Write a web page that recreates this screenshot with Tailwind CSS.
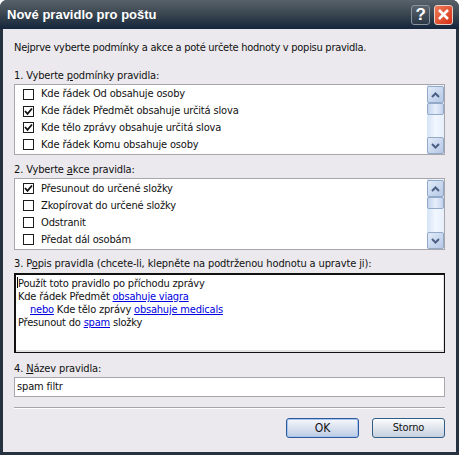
<!DOCTYPE html>
<html lang="cs">
<head>
<meta charset="UTF-8">
<title>Nové pravidlo pro poštu</title>
<script src="https://cdn.jsdelivr.net/npm/@tailwindcss/browser@4"></script>
</head>
<body class="bg-white overflow-hidden">
<div class="w-[459px] h-[455px] flex flex-col rounded-t-[7px] overflow-hidden bg-[#26323f] font-['DejaVu_Sans_Condensed','DejaVu_Sans',sans-serif] [font-stretch:condensed] text-[11px] leading-[14px] tracking-[-0.15px] text-[#111]">

  <!-- titlebar -->
  <div class="h-[29px] shrink-0 flex items-center pl-[7px] pr-[6px] bg-gradient-to-b from-[#59626b] via-[#39454f] to-[#14253c]">
    <span class="flex-1 font-['Liberation_Sans',sans-serif] font-bold text-[13px] tracking-normal text-white">Nové pravidlo pro poštu</span>
    <div class="w-[19px] h-[20px] mr-[4px] rounded-[3px] border border-[#8a949e] bg-gradient-to-b from-[#5a646e] to-[#2c3846] flex items-center justify-center font-['Liberation_Sans',sans-serif] font-bold text-[17px] text-white">?</div>
    <div class="w-[19px] h-[20px] rounded-[3px] border border-[#e8d0c8] bg-gradient-to-br from-[#ee7a55] to-[#d42a10] flex items-center justify-center">
      <svg width="13" height="13" viewBox="0 0 13 13"><path d="M2 2 L11 11 M11 2 L2 11" stroke="#fff" stroke-width="2.6" fill="none"/></svg>
    </div>
  </div>

  <!-- dialog body -->
  <div class="mx-[3px] mb-[3px] h-[423px] bg-[#ebe9ed] px-[11px] flex flex-col">
    <p class="mt-[12px] h-[14px] tracking-[-0.27px]">Nejprve vyberte podmínky a akce a poté určete hodnoty v popisu pravidla.</p>

    <p class="mt-[14px] h-[14px]">1. Vyberte <u>p</u>odmínky pravidla:</p>
    <div class="mt-[1px] h-[71px] border border-[#a7a6aa] bg-white flex">
      <div class="flex-1 grid grid-rows-4 pl-[8px] pt-[1px] pb-[1px]">
        <label class="flex items-center gap-[7px]"><span class="w-[11px] h-[11px] border border-[#1c1c1c] bg-white"></span>Kde řádek Od obsahuje osoby</label>
        <label class="flex items-center gap-[7px]"><span class="w-[11px] h-[11px] border border-[#1c1c1c] bg-white flex items-center justify-center"><svg width="9" height="9" viewBox="0 0 9 9"><path d="M1 4 L3.5 6.8 L8 1.5" stroke="#111" stroke-width="1.8" fill="none"/></svg></span>Kde řádek Předmět obsahuje určitá slova</label>
        <label class="flex items-center gap-[7px]"><span class="w-[11px] h-[11px] border border-[#1c1c1c] bg-white flex items-center justify-center"><svg width="9" height="9" viewBox="0 0 9 9"><path d="M1 4 L3.5 6.8 L8 1.5" stroke="#111" stroke-width="1.8" fill="none"/></svg></span>Kde tělo zprávy obsahuje určitá slova</label>
        <label class="flex items-center gap-[7px]"><span class="w-[11px] h-[11px] border border-[#1c1c1c] bg-white"></span>Kde řádek Komu obsahuje osoby</label>
      </div>
      <div class="w-[17px] flex flex-col bg-gradient-to-r from-[#d5e4f8] via-[#f2f7fe] to-[#e6effb]">
        <div class="h-[17px] mt-[1px] rounded-[2px] border border-[#93a9c8] bg-gradient-to-br from-[#e2ebf8] to-[#b4c8e6] flex items-center justify-center"><svg width="9" height="6" viewBox="0 0 9 6"><path d="M1 5 L4.5 1.5 L8 5" stroke="#4d6185" stroke-width="2" fill="none"/></svg></div>
        <div class="h-[12px] rounded-[2px] border border-[#93a9c8] bg-gradient-to-r from-[#c3d3ee] via-[#e6eefa] to-[#c3d3ee]"></div>
        <div class="flex-1"></div>
        <div class="h-[17px] rounded-[2px] border border-[#93a9c8] bg-gradient-to-br from-[#e2ebf8] to-[#b4c8e6] flex items-center justify-center"><svg width="9" height="6" viewBox="0 0 9 6"><path d="M1 1 L4.5 4.5 L8 1" stroke="#4d6185" stroke-width="2" fill="none"/></svg></div>
      </div>
    </div>

    <p class="mt-[8px] h-[14px]">2. Vyberte <u>a</u>kce pravidla:</p>
    <div class="mt-[1px] h-[72px] border border-[#a7a6aa] bg-white flex">
      <div class="flex-1 grid grid-rows-4 pl-[8px] pt-[1px] pb-[1px]">
        <label class="flex items-center gap-[7px]"><span class="w-[11px] h-[11px] border border-[#1c1c1c] bg-white flex items-center justify-center"><svg width="9" height="9" viewBox="0 0 9 9"><path d="M1 4 L3.5 6.8 L8 1.5" stroke="#111" stroke-width="1.8" fill="none"/></svg></span>Přesunout do určené složky</label>
        <label class="flex items-center gap-[7px]"><span class="w-[11px] h-[11px] border border-[#1c1c1c] bg-white"></span>Zkopírovat do určené složky</label>
        <label class="flex items-center gap-[7px]"><span class="w-[11px] h-[11px] border border-[#1c1c1c] bg-white"></span>Odstranit</label>
        <label class="flex items-center gap-[7px]"><span class="w-[11px] h-[11px] border border-[#1c1c1c] bg-white"></span>Předat dál osobám</label>
      </div>
      <div class="w-[17px] flex flex-col bg-gradient-to-r from-[#d5e4f8] via-[#f2f7fe] to-[#e6effb]">
        <div class="h-[17px] mt-[1px] rounded-[2px] border border-[#93a9c8] bg-gradient-to-br from-[#e2ebf8] to-[#b4c8e6] flex items-center justify-center"><svg width="9" height="6" viewBox="0 0 9 6"><path d="M1 5 L4.5 1.5 L8 5" stroke="#4d6185" stroke-width="2" fill="none"/></svg></div>
        <div class="h-[12px] rounded-[2px] border border-[#93a9c8] bg-gradient-to-r from-[#c3d3ee] via-[#e6eefa] to-[#c3d3ee]"></div>
        <div class="flex-1"></div>
        <div class="h-[17px] rounded-[2px] border border-[#93a9c8] bg-gradient-to-br from-[#e2ebf8] to-[#b4c8e6] flex items-center justify-center"><svg width="9" height="6" viewBox="0 0 9 6"><path d="M1 1 L4.5 4.5 L8 1" stroke="#4d6185" stroke-width="2" fill="none"/></svg></div>
      </div>
    </div>

    <p class="mt-[7px] h-[14px] tracking-[-0.12px]">3. P<u>o</u>pis pravidla (chcete-li, klepněte na podtrženou hodnotu a upravte ji):</p>
    <div class="relative mt-[2px] h-[80px] border-t-2 border-l-2 border-r border-b border-[#111] bg-white shadow-[inset_0_-2px_0_#e4e3e6,inset_-1px_0_0_#e4e3e6] pl-[2px] pt-[2px] leading-[13px] tracking-[-0.2px]">
      <span class="absolute left-[1px] top-[2px] w-px h-[11px] bg-black"></span>
      <p>Použít toto pravidlo po příchodu zprávy</p>
      <p>Kde řádek Předmět <a class="text-[#0000e0] underline">obsahuje viagra</a></p>
      <p class="pl-[12px]"><a class="text-[#0000e0] underline">nebo</a> Kde tělo zprávy <a class="text-[#0000e0] underline">obsahuje medicals</a></p>
      <p>Přesunout do <a class="text-[#0000e0] underline">spam</a> složky</p>
    </div>

    <p class="mt-[9px] h-[14px]">4. <u>N</u>ázev pravidla:</p>
    <div class="mt-[1px] h-[20px] border border-[#a7a6aa] bg-white flex items-center pl-[2px]">spam filtr</div>

    <div class="mt-[10px] h-[2px] border-t border-[#a7a6aa] bg-white"></div>

    <div class="mt-[9px] flex justify-end gap-[13px]">
      <button class="w-[73px] h-[20px] rounded-[3px] border border-[#2a5a9e] bg-gradient-to-b from-[#f6f8fc] to-[#bccbe3] shadow-[inset_0_0_0_1px_#a9c4ec] text-[12px]">OK</button>
      <button class="w-[73px] h-[20px] rounded-[3px] border border-[#2f5f86] bg-gradient-to-b from-[#fbfcfd] to-[#c6d0de]">Storno</button>
    </div>
  </div>
</div>
</body>
</html>
